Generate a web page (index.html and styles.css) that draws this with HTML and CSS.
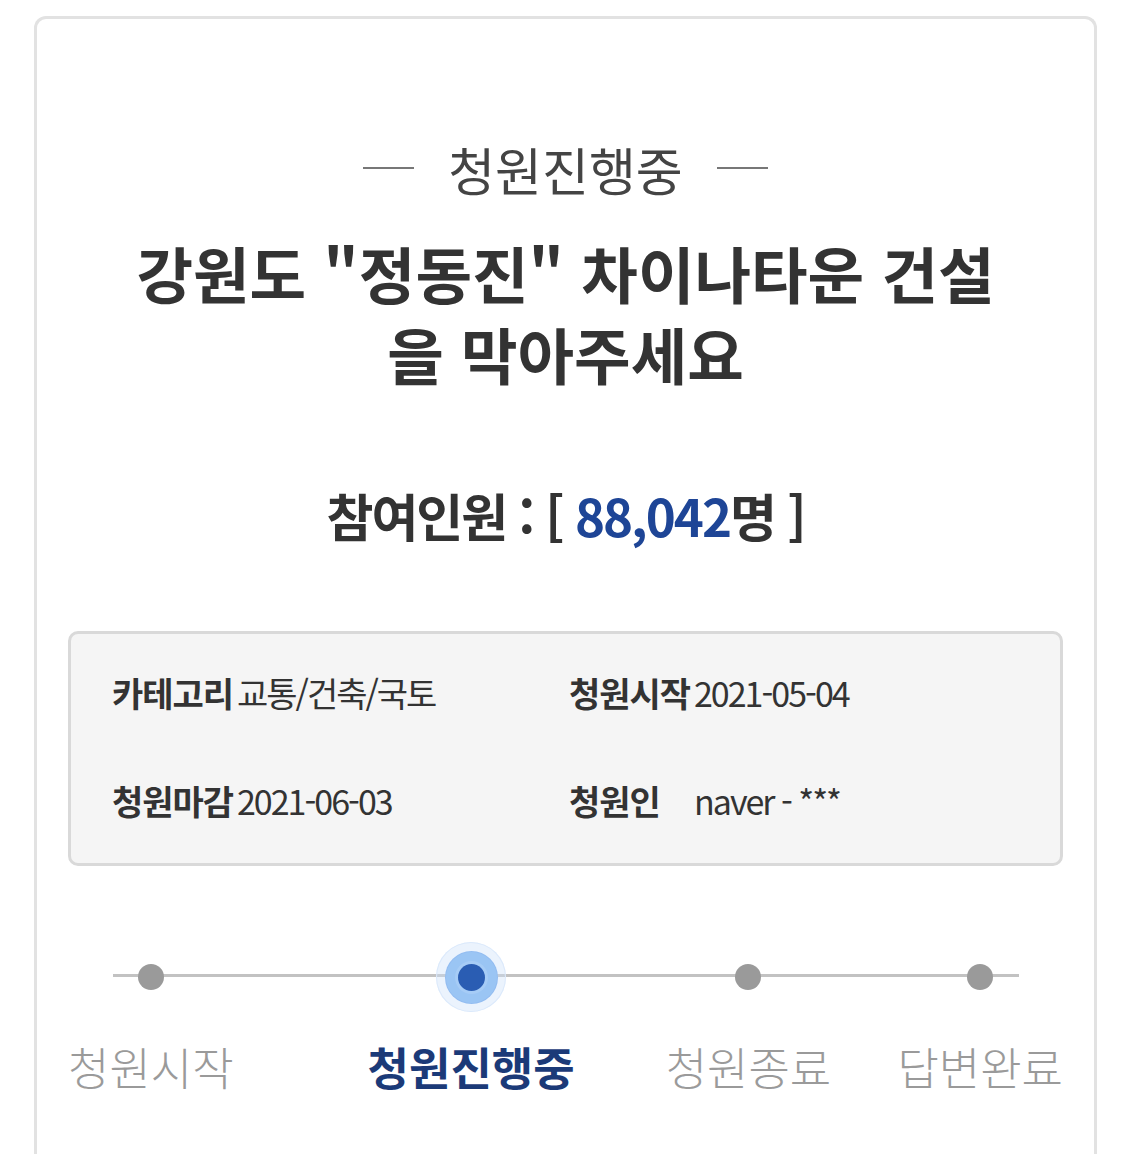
FILE: index.html
```html
<!DOCTYPE html>
<html lang="ko">
    <head>
        <meta charset="utf-8">
        <title>청원진행중</title>
        <link rel="stylesheet" href="styles.css">
    </head>
    <body>
        <div class="card">
            <div class="status">
                <span class="dash"></span>
                <span class="status-text">청원진행중</span>
                <span class="dash"></span>
            </div>
            <h1 class="title">강원도 "정동진" 차이나타운 건설을 막아주세요</h1>
            <p class="count">참여인원 : [ <span class="num">88,042</span>명 ]</p>

            <div class="info">
                <div class="info-item"><span class="label">카테고리</span><span class="value">교통/건축/국토</span></div>
                <div class="info-item"><span class="label">청원시작</span><span class="value">2021-05-04</span></div>
                <div class="info-item"><span class="label">청원마감</span><span class="value">2021-06-03</span></div>
                <div class="info-item"><span class="label">청원인</span><span class="value">naver - ***</span></div>
            </div>

            <ul class="steps">
                <li class="step step-1">
                    <div class="dot-wrap"><span class="dot"></span></div>
                    <span class="step-name">청원시작</span>
                </li>
                <li class="step step-2 active">
                    <div class="dot-wrap"><span class="dot"></span></div>
                    <span class="step-name">청원진행중</span>
                </li>
                <li class="step step-3">
                    <div class="dot-wrap"><span class="dot"></span></div>
                    <span class="step-name">청원종료</span>
                </li>
                <li class="step step-4">
                    <div class="dot-wrap"><span class="dot"></span></div>
                    <span class="step-name">답변완료</span>
                </li>
            </ul>
        </div>
    </body>
</html>
```
FILE: styles.css
```css
body{
    margin: 0;
    background-color: #fff;
    font-family: "Noto Sans CJK KR", "Noto Sans", sans-serif;
    color: #333;
}
.card{
    margin: 16px 28px 0 34px;
    height: 1200px;
    border: 3px solid #e2e2e2;
    border-bottom: none;
    border-radius: 12px 12px 0 0;
    padding: 120px 31px 0 31px;
    box-sizing: border-box;
}
.status{
    display: flex;
    justify-content: center;
    align-items: center;
    gap: 34px;
    height: 60px;
}
.dash{
    width: 51px;
    height: 2px;
    background-color: #777;
    margin-top: -2px;
}
.status-text{
    font-size: 51px;
    line-height: 60px;
    color: #444;
    font-weight: 400;
}
.title{
    max-width: 890px;
    margin: 33px auto 0 auto;
    font-size: 61.5px;
    line-height: 81px;
    font-weight: 700;
    text-align: center;
    color: #333;
}
.count{
    margin: 86px 0 0 0;
    font-size: 51px;
    line-height: 70px;
    font-weight: 700;
    letter-spacing: -2px;
    text-align: center;
    color: #333;
}
.num{
    color: #1e4596;
}
.info{
    margin-top: 81px;
    display: grid;
    grid-template-columns: 457px 1fr;
    row-gap: 60px;
    padding: 35px 41px 38px 41px;
    background-color: #f5f5f5;
    border: 3px solid #d9d9d9;
    border-radius: 10px;
}
.info-item{
    font-size: 34px;
    line-height: 48px;
    white-space: nowrap;
}
.label{
    display: inline-block;
    width: 125px;
    font-weight: 700;
    letter-spacing: -1px;
    color: #333;
}
.value{
    font-weight: 400;
    letter-spacing: -2px;
    color: #333;
}
.steps{
    list-style: none;
    margin: 76px 0 0 0;
    padding: 0;
    display: flex;
    position: relative;
}
.steps::before{
    content: "";
    position: absolute;
    left: 45px;
    right: 44px;
    top: 32px;
    height: 3px;
    background-color: #c2c2c2;
}
.step{
    display: flex;
    flex-direction: column;
    align-items: center;
    position: relative;
}
.step-2{
    margin-left: 134px;
}
.step-3{
    margin-left: 91px;
}
.step-4{
    margin-left: auto;
}
.dot-wrap{
    width: 70px;
    height: 70px;
    display: flex;
    align-items: center;
    justify-content: center;
    border-radius: 50%;
}
.dot{
    width: 26px;
    height: 26px;
    border-radius: 50%;
    background-color: #9a9a9a;
}
.step-name{
    margin-top: 27px;
    font-size: 45px;
    line-height: 56px;
    font-weight: 300;
    color: #9a9a9a;
    white-space: nowrap;
}
.active .dot-wrap{
    background-color: rgba(205, 226, 251, 0.4);
    box-shadow: inset 0 0 0 1px #dbe9fb;
}
.active .dot{
    width: 27px;
    height: 27px;
    background-color: #2a5db3;
    box-shadow: 0 0 0 3px rgba(175, 208, 246, 0.6), 0 0 0 12px rgba(165, 206, 249, 0.45), 0 0 0 13px #93bdf1;
}
.active .step-name{
    font-weight: 700;
    color: #1b3a78;
}
```
